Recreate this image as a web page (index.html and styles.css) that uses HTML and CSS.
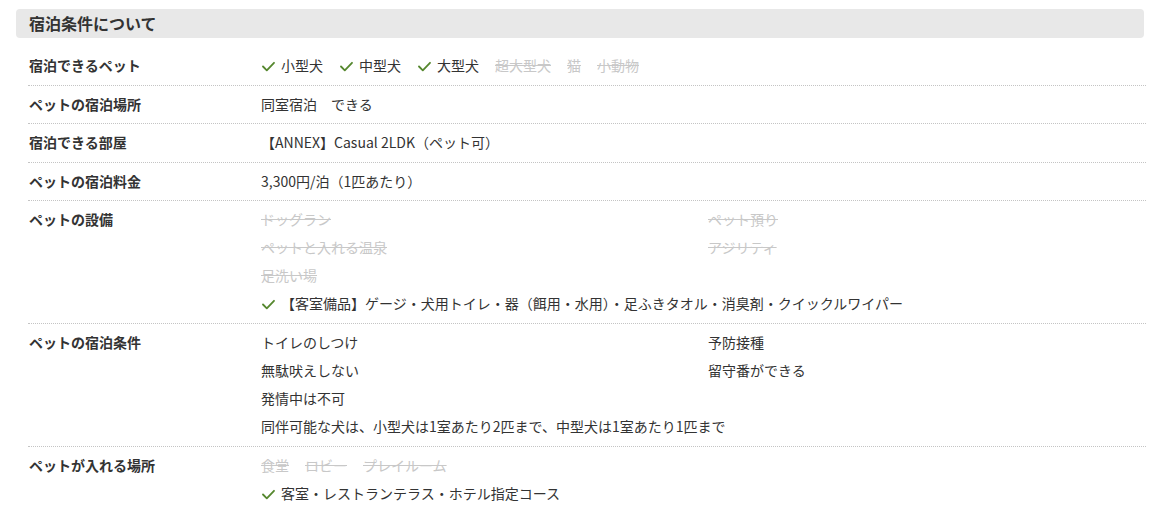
FILE: index.html
```html
<!DOCTYPE html>
<html lang="ja">
<head>
<meta charset="utf-8">
<title>宿泊条件について</title>
<link rel="stylesheet" href="styles.css">
</head>
<body>
<section class="wrap">
  <h2 class="head">宿泊条件について</h2>
  <div class="table">
    <div class="row">
      <div class="label">宿泊できるペット</div>
      <div class="value inline">
        <span class="item ok"><svg class="chk" viewBox="0 0 13 11"><polyline points="1,5.5 4.8,9.3 12,1.8"/></svg>小型犬</span>
        <span class="item ok"><svg class="chk" viewBox="0 0 13 11"><polyline points="1,5.5 4.8,9.3 12,1.8"/></svg>中型犬</span>
        <span class="item ok"><svg class="chk" viewBox="0 0 13 11"><polyline points="1,5.5 4.8,9.3 12,1.8"/></svg>大型犬</span>
        <span class="item ng">超大型犬</span>
        <span class="item ng">猫</span>
        <span class="item ng">小動物</span>
      </div>
    </div>
    <div class="row">
      <div class="label">ペットの宿泊場所</div>
      <div class="value">同室宿泊　できる</div>
    </div>
    <div class="row">
      <div class="label">宿泊できる部屋</div>
      <div class="value">【ANNEX】Casual 2LDK（ペット可）</div>
    </div>
    <div class="row">
      <div class="label">ペットの宿泊料金</div>
      <div class="value">3,300円/泊（1匹あたり）</div>
    </div>
    <div class="row">
      <div class="label">ペットの設備</div>
      <div class="value grid">
        <span class="ng">ドッグラン</span>
        <span class="ng">ペット預り</span>
        <span class="ng">ペットと入れる温泉</span>
        <span class="ng">アジリティ</span>
        <span class="ng full">足洗い場</span>
        <span class="ok full"><svg class="chk" viewBox="0 0 13 11"><polyline points="1,5.5 4.8,9.3 12,1.8"/></svg>【客室備品】ゲージ・犬用トイレ・器（餌用・水用）・足ふきタオル・消臭剤・クイックルワイパー</span>
      </div>
    </div>
    <div class="row">
      <div class="label">ペットの宿泊条件</div>
      <div class="value grid">
        <span>トイレのしつけ</span>
        <span>予防接種</span>
        <span>無駄吠えしない</span>
        <span>留守番ができる</span>
        <span class="full">発情中は不可</span>
        <span class="full">同伴可能な犬は、小型犬は1室あたり2匹まで、中型犬は1室あたり1匹まで</span>
      </div>
    </div>
    <div class="row last">
      <div class="label">ペットが入れる場所</div>
      <div class="value">
        <div class="inline">
          <span class="item ng">食堂</span>
          <span class="item ng">ロビー</span>
          <span class="item ng">プレイルーム</span>
        </div>
        <div class="ok"><svg class="chk" viewBox="0 0 13 11"><polyline points="1,5.5 4.8,9.3 12,1.8"/></svg>客室・レストランテラス・ホテル指定コース</div>
      </div>
    </div>
  </div>
</section>
</body>
</html>
```
FILE: styles.css
```css
html, body {
  margin: 0;
  padding: 0;
  background: #fff;
}
body {
  font-family: "Noto Sans CJK JP", "Noto Sans", sans-serif;
  color: #333;
  font-size: 14px;
}
.wrap {
  padding: 9px 12px 0 16px;
}
.head {
  margin: 0;
  height: 29px;
  line-height: 29px;
  padding-left: 13px;
  background: #e8e8e8;
  border-radius: 4px;
  font-size: 16px;
  font-weight: 700;
  color: #333;
}
.table {
  margin: 9px -2px 0 12px;
}
.row {
  display: flex;
  padding: 4px 0 5.6px;
  border-bottom: 1px dotted #c4c4c4;
  line-height: 28px;
}
.row.last {
  border-bottom: none;
}
.label {
  width: 232px;
  padding-left: 1px;
  flex-shrink: 0;
  font-weight: 700;
  color: #333;
}
.value {
  flex: 1;
}
.inline {
  display: flex;
}
.item {
  margin-right: 16px;
}
.grid {
  display: grid;
  grid-template-columns: 447px 1fr;
}
.grid .full {
  grid-column: 1 / -1;
}
.ng {
  color: #c8c8c8;
  text-decoration: line-through;
}
.chk {
  width: 13px;
  height: 11px;
  margin: 0 6px 0 1px;
  vertical-align: -1px;
}
.chk polyline {
  fill: none;
  stroke: #55872e;
  stroke-width: 1.8;
  stroke-linecap: round;
  stroke-linejoin: round;
}
```
